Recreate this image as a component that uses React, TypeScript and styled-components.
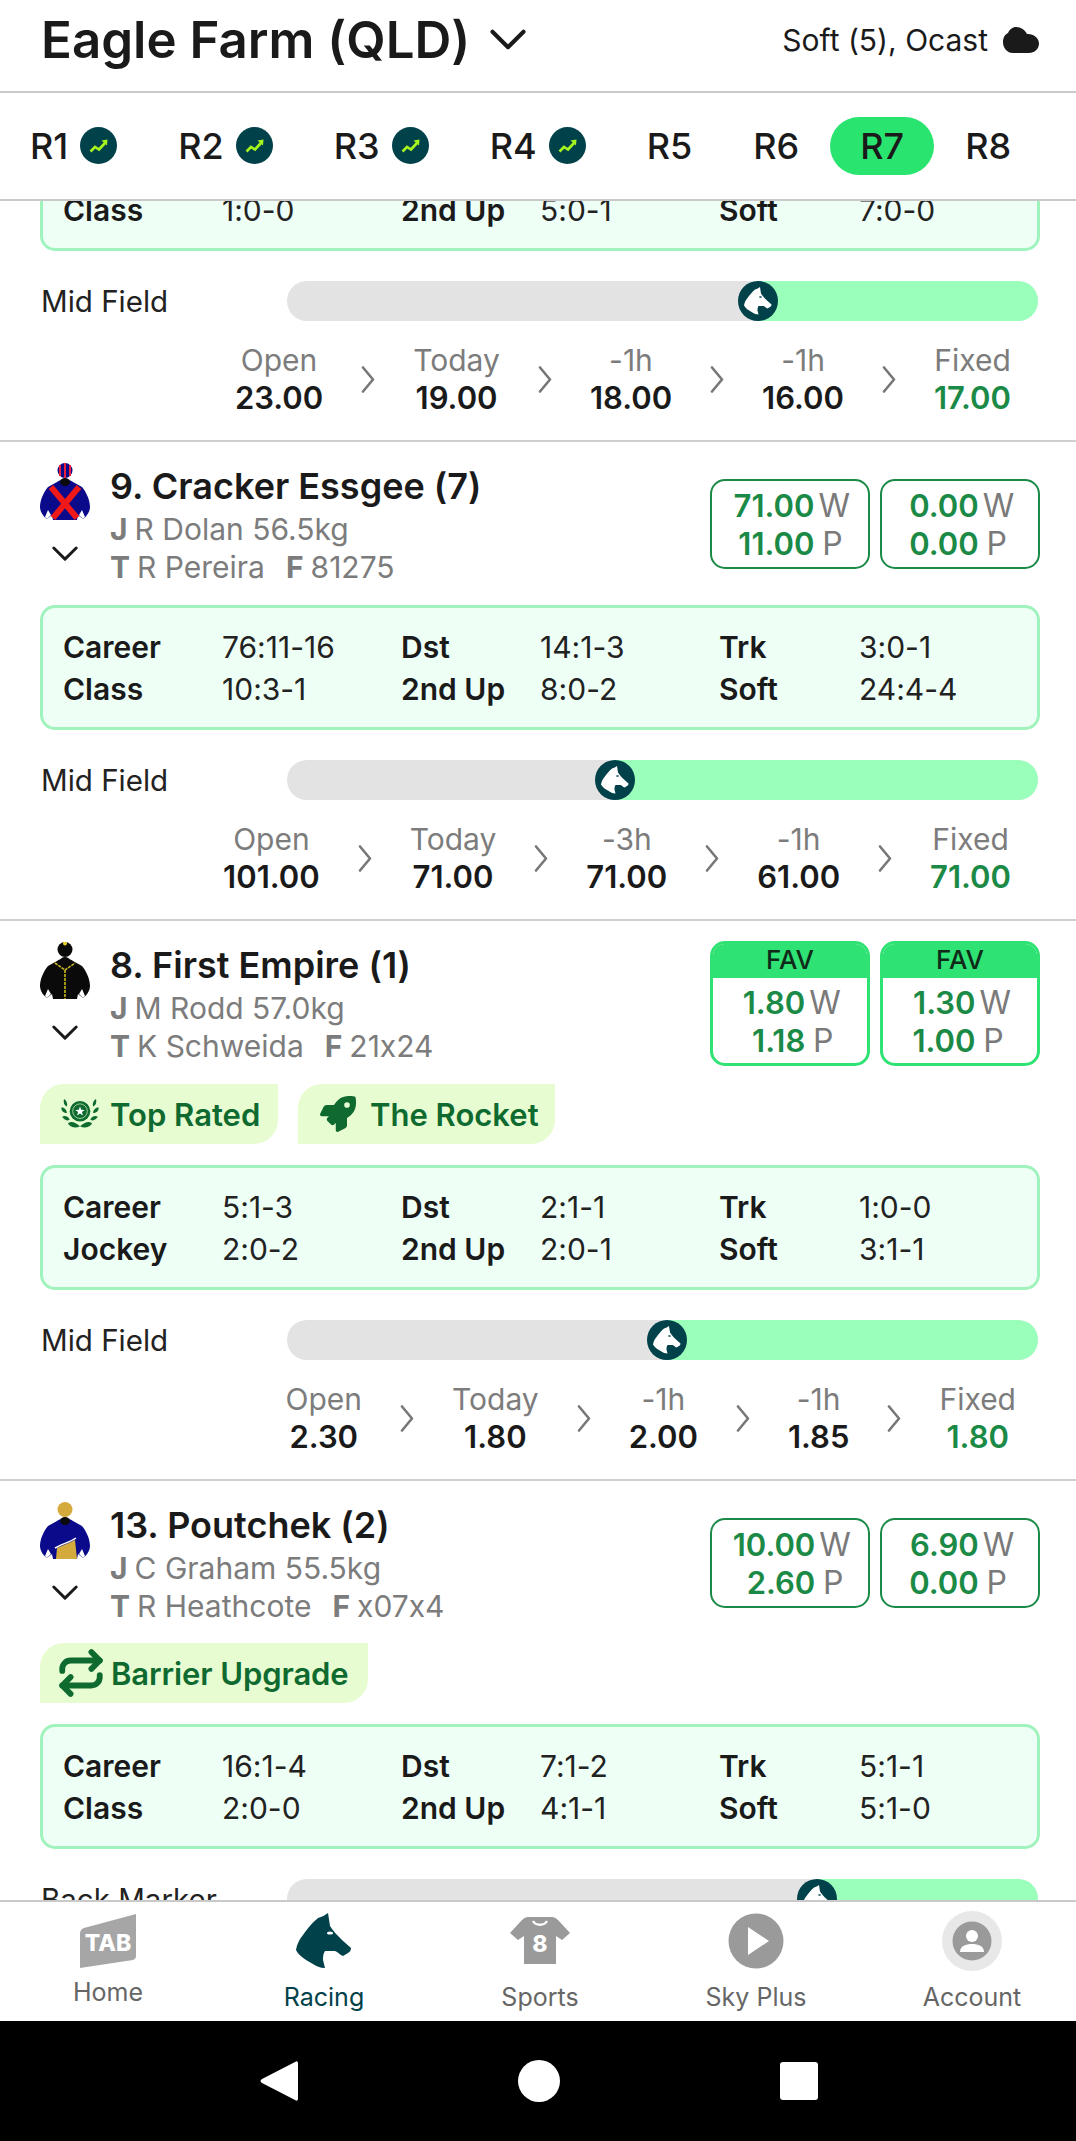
import React from "react";
import styled, { createGlobalStyle } from "styled-components";
import { Repeat } from "lucide-react";
import { FaRocket } from "react-icons/fa";

const Global = createGlobalStyle`
  html, body { margin: 0; padding: 0; background: #fff; }
  body { font-family: Inter, "Liberation Sans", sans-serif; color: #1a1a1a; font-feature-settings: "calt" 0; }
  * { box-sizing: border-box; }
`;

const Page = styled.div`
  width: 1076px; height: 2141px; display: flex; flex-direction: column; overflow: hidden; background: #fff;
`;
const Header = styled.header`
  height: 93px; flex: none; display: flex; align-items: center; justify-content: space-between;
  padding: 0 37px 11px 41px; border-bottom: 2px solid #c9c9c9;
`;
const TitleWrap = styled.div`display: flex; align-items: center; gap: 20px;`;
const Title = styled.h1`margin: 0; font-size: 51px; font-weight: 600; line-height: 60px; color: #1a1a1a;`;
const Weather = styled.div`display: flex; align-items: center; gap: 15px; font-size: 30px; color: #1a1a1a;`;

const Tabs = styled.nav`
  height: 108px; flex: none; display: flex; align-items: center; gap: 1px; padding-bottom: 1px;
  border-bottom: 2px solid #c9c9c9; background: #fff;
`;
const Tab = styled.div<{ $active?: boolean }>`
  height: 58px; padding: 0 30px; display: flex; align-items: center; gap: 12px; border-radius: 29px;
  font-size: 36px; font-weight: 500; background: ${p => (p.$active ? "#2ae470" : "transparent")};
`;
const Scroll = styled.main`flex: 1; min-height: 0; overflow: hidden;`;
const List = styled.div`margin-top: -33px;`;
const Row = styled.section<{ $last?: boolean }>`
  padding: 20px 36px 24px 40px;
  border-bottom: ${p => (p.$last ? "none" : "2px solid #cfcfcf")};
`;
const Clipped = styled(Row)`padding-top: 0;`;
const Top = styled.div`display: flex; align-items: center; justify-content: space-between; height: 124px; margin-bottom: 19px;`;
const Runner = styled.div`display: flex; gap: 20px;`;
const SilkCol = styled.div`width: 50px; display: flex; flex-direction: column; align-items: center; gap: 25px; padding-top: 1px;`;
const Name = styled.div`font-size: 36px; font-weight: 600; line-height: 48px; color: #1a1a1a;`;
const Sub = styled.div`font-size: 30px; line-height: 38px; color: #7c7c7c; white-space: nowrap;`;
const SubKey = styled.b`font-weight: 700; margin-right: 7px;`;
const SubSecond = styled(SubKey)`margin-left: 21px;`;
const Boxes = styled.div`display: flex; gap: 10px;`;
const Box = styled.div<{ $fav?: boolean }>`
  width: 160px; border-radius: 15px; overflow: hidden;
  border: ${p => (p.$fav ? "3px solid #2ee273" : "2px solid #1b8a47")};
  height: ${p => (p.$fav ? "125px" : "90px")};
`;
const FavHead = styled.div`
  height: 35px; background: #2ee273; font-size: 26px; font-weight: 500; line-height: 33px; text-align: center; color: #0f2a18; margin: -1px -1px 0;
`;
const Prices = styled.div`
  display: grid; grid-template-columns: auto 28px; justify-content: center; column-gap: 4px; padding-top: 6px;
  line-height: 38px; font-size: 31px;
`;
const Price = styled.span`font-weight: 600; color: #1b8a47; text-align: right;`;
const Unit = styled.span`color: #7a7a7a; text-align: center; font-size: 32px;`;

const Tags = styled.div<{ $lift?: number }>`display: flex; gap: 20px; margin: ${p => p.$lift ?? 0}px 0 21px;`;
const Tag = styled.div<{ $w: number }>`
  height: 60px; width: ${p => p.$w}px; display: flex; align-items: center; gap: 10px; padding-left: 20px;
  background: #e8fcd2; color: #0f6a30; font-size: 31px; font-weight: 600; white-space: nowrap;
  border-radius: 24px 0 24px 0;
`;
const RocketIcon = styled(FaRocket)`font-size: 36px; margin: 0 4px 0 2px; color: #0f6a30;`;
const RepeatIcon = styled(Repeat)`margin: 0 -5px 0 -4px; flex: none; color: #0f6a30;`;
const TightText = styled.span`letter-spacing: -0.1px;`;

const Stats = styled.div<{ $single?: boolean }>`
  height: ${p => (p.$single ? "83px" : "125px")}; border: 3px solid #a1f3bd; border-radius: 15px; background: #eefff6;
  display: grid; grid-template-columns: 159px 179px 139px 179px 140px 1fr; grid-auto-rows: 42px;
  padding: 18px 0 0 20px; font-size: 30px; line-height: 42px; color: #1a1a1a;
`;
const StatKey = styled.span`font-weight: 600;`;
const StatVal = styled.span`font-weight: 400; color: #222;`;

const BarRow = styled.div`display: flex; align-items: center; justify-content: space-between; margin: 30px 2px 0 1px; height: 40px;`;
const BarLabel = styled.div`font-size: 29.500px; color: #222;`;
const Track = styled.div`position: relative; width: 751px; height: 40px; border-radius: 20px; background: #e3e3e3; overflow: hidden;`;
const Fill = styled.div`position: absolute; top: 0; bottom: 0; right: 0; background: #99ffbb;`;
const Marker = styled.div`
  position: absolute; top: 0; width: 40px; height: 40px; margin-left: -20px; border-radius: 50%; background: #00414a;
  display: flex; align-items: center; justify-content: center;
`;
const Odds = styled.div<{ $end: number }>`
  display: flex; justify-content: flex-end; align-items: center; gap: 38px; margin-top: 21px; padding-right: ${p => p.$end}px;
`;
const OddItem = styled.div`display: flex; flex-direction: column; align-items: center; font-size: 30px; line-height: 37px;`;
const OddLabel = styled.span`color: #7c7c7c;`;
const OddValue = styled.span<{ $green?: boolean }>`font-size: 31px; font-weight: 600; color: ${p => (p.$green ? "#1b8a47" : "#1a1a1a")};`;

const BottomNav = styled.footer`
  height: 121px; flex: none; border-top: 2px solid #c9c9c9; background: #fff;
  display: grid; grid-template-columns: repeat(5, 216px); padding-top: 9px;
`;
const NavItem = styled.div<{ $active?: boolean; $raised?: boolean }>`
  display: flex; flex-direction: column; align-items: center; font-size: 25px; line-height: 32px;
  color: ${p => (p.$active ? "#00414a" : "#666")}; gap: ${p => (p.$raised ? "5px" : "10px")};
`;
const NavIcon = styled.div`height: 60px; display: flex; align-items: center; justify-content: center;`;
const SysBar = styled.div`
  height: 120px; flex: none; background: #000; display: flex; align-items: center; justify-content: center; gap: 220px; padding-left: 2px;
`;

const Down = ({ w = 26, sw = 3 }: { w?: number; sw?: number }) => (
  <svg width={w} height={w * 0.6} viewBox="0 0 26 16" fill="none">
    <path d="M1.500 2 L13 13.500 L24.500 2" stroke="#1a1a1a" strokeWidth={sw} strokeLinecap="round" strokeLinejoin="round" />
  </svg>
);
const Next = () => (
  <svg width="14" height="27" viewBox="0 0 14 27" fill="none">
    <path d="M2 1.500 L12 13.500 L2 25.500" stroke="#777" strokeWidth="2.600" strokeLinecap="round" strokeLinejoin="round" />
  </svg>
);
const Cloud = () => (
  <svg width="36" height="26" viewBox="0 0 36 26">
    <path d="M13 0C18 0 22 3 24 7C30 6.500 36 10.500 36 16.500C36 22 31.500 26 26 26H10C4 26 0 21 0 15C0 10 2.500 7 5 6C6.500 2.500 9.500 0 13 0Z" fill="#1a1a1a" />
  </svg>
);
const Trend = () => (
  <svg width="37" height="37" viewBox="0 0 37 37">
    <circle cx="18.500" cy="18.500" r="18.500" fill="#00414a" />
    <path d="M10.500 24.500L15 20L19 22.500L25 16" stroke="#a6f51e" strokeWidth="2.600" fill="none" />
    <path d="M21.500 13.500L27.500 12.500L27 18.500Z" fill="#a6f51e" />
  </svg>
);
const HORSE = "M32 0L34 13C37 18 42 23 46 27L55 35C55 37 54 39 52 40L47 43C44 42 42 39 39 38L29 38C27 41 27 44 27 47L29 55C24 55 20 53 17 51C10 47 3 43 0 37C1 31 3 27 7 22C11 16 17 9 22 5C26 4 29 2 32 0Z";
const MarkerHorse = () => (
  <svg width="28" height="28" viewBox="0 0 56 56">
    <path d={HORSE} fill="#fff" />
    <ellipse cx="33" cy="20" rx="3" ry="1.500" fill="#00414a" />
  </svg>
);

type SilkKind = "cross" | "black" | "gold";
const SILK = "M17 19C20 16 30 16 33 19L42 24C47 30 50 38 50 44C50 49 46 54 43 56L38 52L37 57H13L12 52L7 56C4 54 0 49 0 44C0 38 3 30 8 24Z";
const Silk = ({ kind }: { kind: SilkKind }) => {
  const body = kind === "black" ? "#0a0a0a" : "#0a0a8a";
  return (
    <svg width="50" height="58" viewBox="0 0 50 58">
      <circle cx="25" cy="7.500" r="7.500" fill={kind === "black" ? "#0a0a0a" : kind === "gold" ? "#d4aa3c" : "#0a0a8a"} />
      {kind === "cross" && (
        <g stroke="#e8203a" strokeWidth="2">
          <path d="M20 2V13M25 0V15M30 2V13" />
        </g>
      )}
      {kind === "black" && <circle cx="25" cy="1.500" r="2" fill="#e8d020" />}
      <path d={SILK} fill={body} />
      <path d="M8 47L11 52L7 56L5 54ZM42 47L39 52L43 56L45 54Z" fill="#fff" />
      <ellipse cx="25" cy="19" rx="5" ry="4" fill="#0a0a0a" />
      {kind === "cross" && (
        <path d="M11 24L37 55M39 24L13 55" stroke="#f01818" strokeWidth="6" />
      )}
      {kind === "black" && (
        <path d="M15 21L25 28L35 21M25 28V57" stroke="#c8b820" strokeWidth="1.600" fill="none" strokeDasharray="3 1" />
      )}
      {kind === "gold" && (
        <>
          <path d="M16 57L17 46C23 43 30 41 35 38L37 57Z" fill="#d4aa3c" />
          <path d="M15 46C22 42 30 40 36 36" stroke="#fff" strokeWidth="1.500" fill="none" />
        </>
      )}
    </svg>
  );
};
const Laurel = () => (
  <svg width="40" height="30" viewBox="0 0 40 32" fill="#0f6a30">
    <circle cx="20" cy="13" r="11" />
    <circle cx="20" cy="13" r="7.800" fill="none" stroke="#cfe8c0" strokeWidth="0.800" />
    <path d="M20 8L21.300 11.400L25 11.600L22.100 13.900L23.100 17.500L20 15.500L16.900 17.500L17.900 13.900L15 11.600L18.700 11.400Z" fill="#fff" />
    <path d="M3 0C6 2 7 5 6 8C3 7 2 3 3 0ZM37 0C34 2 33 5 34 8C37 7 38 3 37 0ZM0 9C3 9 6 11 6 15C3 15 0 13 0 9ZM40 9C37 9 34 11 34 15C37 15 40 13 40 9ZM1 19C4 17 8 19 9 22C6 24 3 22 1 19ZM39 19C36 17 32 19 31 22C34 24 37 22 39 19ZM7 26C11 23 15 25 20 29C15 32 10 30 7 26ZM33 26C29 23 25 25 20 29C25 32 30 30 33 26Z" />
  </svg>
);
const TabLogo = () => (
  <svg width="56" height="54" viewBox="0 0 56 54">
    <path d="M0 20C0 17 1 15 4 14L56 0V42C56 44 55 45 53 46L0 54Z" fill="#a6a6a6" />
    <text x="28" y="37" textAnchor="middle" fontFamily="Inter, sans-serif" fontSize="23" fontWeight="800" fill="#fff">TAB</text>
  </svg>
);
const RacingIcon = () => (
  <svg width="56" height="56" viewBox="0 0 56 56">
    <path d={HORSE} fill="#00414a" />
    <ellipse cx="34" cy="20" rx="3" ry="1.600" fill="#fff" />
  </svg>
);
const Jersey = () => (
  <svg width="60" height="48" viewBox="0 0 60 48">
    <path d="M18 0H42C44 0 46 1 48 3L60 16L52 23L46 19V47H14V19L8 23L0 16L12 3C14 1 16 0 18 0Z" fill="#9a9a9a" />
    <path d="M23 4C26 9 34 9 37 4" stroke="#fff" strokeWidth="2.400" fill="none" />
    <text x="30" y="35" textAnchor="middle" fontFamily="Inter, sans-serif" fontSize="23" fontWeight="800" fill="#fff">8</text>
  </svg>
);
const PlayIcon = () => (
  <svg width="56" height="56" viewBox="0 0 56 56">
    <circle cx="28" cy="28" r="27.500" fill="#9a9a9a" />
    <path d="M20 14L41 28L20 42Z" fill="#fff" />
  </svg>
);
const AccountIcon = () => (
  <svg width="60" height="60" viewBox="0 0 60 60">
    <circle cx="30" cy="30" r="30" fill="#e8e8e8" />
    <circle cx="30" cy="30" r="19.500" fill="#9a9a9a" />
    <circle cx="30" cy="25" r="6" fill="#fff" />
    <path d="M18 41C18 35 24 33 30 33C36 33 42 35 42 41Z" fill="#fff" />
  </svg>
);

type Odd = [string, string];
const OddsLine = ({ items, end = 29 }: { items: Odd[]; end?: number }) => (
  <Odds $end={end}>
    {items.map(([l, v], i) => (
      <React.Fragment key={i}>
        {i > 0 && <Next />}
        <OddItem>
          <OddLabel>{l}</OddLabel>
          <OddValue $green={i === items.length - 1}>{v}</OddValue>
        </OddItem>
      </React.Fragment>
    ))}
  </Odds>
);
const Bar = ({ label, pos }: { label: string; pos: number }) => (
  <BarRow>
    <BarLabel>{label}</BarLabel>
    <Track>
      <Fill style={{ left: `${pos}%` }} />
      <Marker style={{ left: `${pos}%` }}><MarkerHorse /></Marker>
    </Track>
  </BarRow>
);
const StatLine = ({ cells }: { cells: string[] }) => (
  <>
    {cells.map((c, i) => (i % 2 === 0 ? <StatKey key={i}>{c}</StatKey> : <StatVal key={i}>{c}</StatVal>))}
  </>
);
const PriceBox = ({ w, p, fav }: { w: string; p: string; fav?: boolean }) => (
  <Box $fav={fav}>
    {fav && <FavHead>FAV</FavHead>}
    <Prices>
      <Price>{w}</Price><Unit>W</Unit>
      <Price>{p}</Price><Unit>P</Unit>
    </Prices>
  </Box>
);
const Head = ({ kind, name, j, t, f, children }: { kind: SilkKind; name: string; j: string; t: string; f: string; children: React.ReactNode }) => (
  <Top>
    <Runner>
      <SilkCol><Silk kind={kind} /><Down /></SilkCol>
      <div>
        <Name>{name}</Name>
        <Sub><SubKey>J</SubKey>{j}</Sub>
        <Sub><SubKey>T</SubKey>{t}<SubSecond>F</SubSecond>{f}</Sub>
      </div>
    </Runner>
    <Boxes>{children}</Boxes>
  </Top>
);

export default function App() {
  const tabs = ["R1", "R2", "R3", "R4", "R5", "R6", "R7", "R8"];
  return (
    <Page>
      <Global />
      <Header>
        <TitleWrap>
          <Title>Eagle Farm (QLD)</Title>
          <Down w={36} sw={3} />
        </TitleWrap>
        <Weather>Soft (5), Ocast <Cloud /></Weather>
      </Header>
      <Tabs>
        {tabs.map((t, i) => (
          <Tab key={t} $active={t === "R7"}>{t}{i < 4 && <Trend />}</Tab>
        ))}
      </Tabs>
      <Scroll>
        <List>
          <Clipped>
            <Stats $single><StatLine cells={["Class", "1:0-0", "2nd Up", "5:0-1", "Soft", "7:0-0"]} /></Stats>
            <Bar label="Mid Field" pos={62.7} />
            <OddsLine items={[["Open", "23.00"], ["Today", "19.00"], ["-1h", "18.00"], ["-1h", "16.00"], ["Fixed", "17.00"]]} />
          </Clipped>
          <Row>
            <Head kind="cross" name="9. Cracker Essgee (7)" j="R Dolan 56.5kg" t="R Pereira" f="81275">
              <PriceBox w="71.00" p="11.00" /><PriceBox w="0.00" p="0.00" />
            </Head>
            <Stats>
              <StatLine cells={["Career", "76:11-16", "Dst", "14:1-3", "Trk", "3:0-1"]} />
              <StatLine cells={["Class", "10:3-1", "2nd Up", "8:0-2", "Soft", "24:4-4"]} />
            </Stats>
            <Bar label="Mid Field" pos={43.7} />
            <OddsLine items={[["Open", "101.00"], ["Today", "71.00"], ["-3h", "71.00"], ["-1h", "61.00"], ["Fixed", "71.00"]]} />
          </Row>
          <Row>
            <Head kind="black" name="8. First Empire (1)" j="M Rodd 57.0kg" t="K Schweida" f="21x24">
              <PriceBox fav w="1.80" p="1.18" /><PriceBox fav w="1.30" p="1.00" />
            </Head>
            <Tags $lift={2}>
              <Tag $w={238}><Laurel />Top Rated</Tag>
              <Tag $w={257}><RocketIcon />The Rocket</Tag>
            </Tags>
            <Stats>
              <StatLine cells={["Career", "5:1-3", "Dst", "2:1-1", "Trk", "1:0-0"]} />
              <StatLine cells={["Jockey", "2:0-2", "2nd Up", "2:0-1", "Soft", "3:1-1"]} />
            </Stats>
            <Bar label="Mid Field" pos={50.6} />
            <OddsLine end={24} items={[["Open", "2.30"], ["Today", "1.80"], ["-1h", "2.00"], ["-1h", "1.85"], ["Fixed", "1.80"]]} />
          </Row>
          <Row $last>
            <Head kind="gold" name="13. Poutchek (2)" j="C Graham 55.5kg" t="R Heathcote" f="x07x4">
              <PriceBox w="10.00" p="2.60" /><PriceBox w="6.90" p="0.00" />
            </Head>
            <Tags $lift={-1}>
              <Tag $w={328}><RepeatIcon size={50} strokeWidth={2.800} /><TightText>Barrier Upgrade</TightText></Tag>
            </Tags>
            <Stats>
              <StatLine cells={["Career", "16:1-4", "Dst", "7:1-2", "Trk", "5:1-1"]} />
              <StatLine cells={["Class", "2:0-0", "2nd Up", "4:1-1", "Soft", "5:1-0"]} />
            </Stats>
            <Bar label="Back Marker" pos={70.6} />
          </Row>
        </List>
      </Scroll>
      <BottomNav>
        <NavItem $raised><NavIcon><TabLogo /></NavIcon>Home</NavItem>
        <NavItem $active><NavIcon><RacingIcon /></NavIcon>Racing</NavItem>
        <NavItem><NavIcon><Jersey /></NavIcon>Sports</NavItem>
        <NavItem><NavIcon><PlayIcon /></NavIcon>Sky Plus</NavItem>
        <NavItem><NavIcon><AccountIcon /></NavIcon>Account</NavItem>
      </BottomNav>
      <SysBar>
        <svg width="38" height="42" viewBox="0 0 38 42"><path d="M36 1.500C37 1 38 2 38 3V39C38 40 37 41 36 40.500L2 23C0 22 0 20 2 19Z" fill="#fff" /></svg>
        <svg width="42" height="42" viewBox="0 0 42 42"><circle cx="21" cy="21" r="21" fill="#fff" /></svg>
        <svg width="38" height="38" viewBox="0 0 38 38"><rect width="38" height="38" rx="3" fill="#fff" /></svg>
      </SysBar>
    </Page>
  );
}
